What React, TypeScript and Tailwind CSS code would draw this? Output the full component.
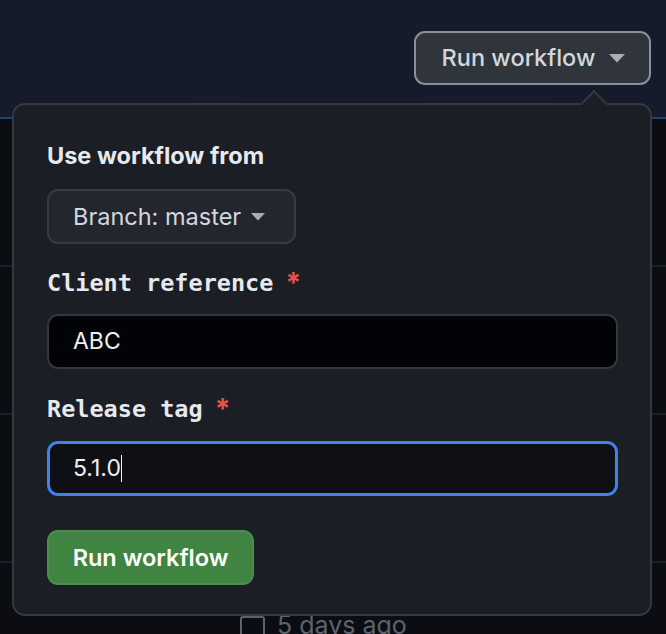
const Caret = ({ className }: { className: string }) => (
  <svg viewBox="0 0 16 9" className={className} fill="currentColor">
    <path d="M0 0h16L8 8.5z" />
  </svg>
);

const ListRow = ({ children }: { children?: React.ReactNode }) => (
  <div className="h-[148px] border-b-2 border-[#1d2128] flex items-end">{children}</div>
);

export default function App() {
  return (
    <div className="w-[666px] h-[634px] relative overflow-hidden bg-[#0b0d12] font-['Inter',sans-serif]">
      <div className="h-[119px] bg-gradient-to-r from-[#151b28] to-[#141c2c] border-b-2 border-[#26426f] flex justify-end items-start pt-[31px] pr-[15px]">
        <button className="w-[237px] h-[54px] rounded-[11px] border-2 border-[#8a9099] bg-[#30343b] flex items-center justify-center gap-[14px] pl-[2px] text-[#d3d7de] text-[23.5px] font-medium">
          <span>Run workflow</span>
          <Caret className="w-[16px] h-[9px] text-[#a9adb5]" />
        </button>
      </div>
      <ListRow />
      <ListRow />
      <ListRow />
      <div className="flex items-start gap-[12px] pl-[240px] pt-[50px] text-[#5c636d] text-[25px] leading-none">
        <span className="w-[25px] h-[25px] border-2 border-[#5c636d] rounded-[3px] mt-[3px] shrink-0" />
        <span className="whitespace-nowrap">5 days ago</span>
      </div>

      <div className="absolute left-[12px] top-[103px] w-[640px] h-[513px] rounded-[13px] border-2 border-[#34383f] bg-[#1b1e25]">
        <div className="absolute left-[570px] top-[-11px] w-[20px] h-[20px] rotate-45 bg-[#1b1e25] border-l-2 border-t-2 border-[#34383f]" />
        <div className="relative flex flex-col items-start px-[33px] pt-[36px]">
          <div className="text-[23.5px] font-bold text-[#e6e9ee] leading-[30px]">Use workflow from</div>
          <button className="mt-[18px] w-[249px] h-[55px] rounded-[11px] border-2 border-[#363a42] bg-[#23262e] flex items-center pl-[24px] gap-[10px] text-[23.5px] text-[#d3d7de]">
            <span>Branch: master</span>
            <Caret className="w-[14px] h-[8px] text-[#a9adb5]" />
          </button>
          <div className="mt-[24px] flex items-center gap-[12px] leading-[30px]">
            <span className="font-['DejaVu_Sans_Mono',monospace] font-bold text-[23.5px] text-[#e6e9ee]">Client reference</span>
            <span className="text-[#e5534b] text-[28px] font-bold">*</span>
          </div>
          <div className="mt-[16px] w-[571px] h-[55px] rounded-[11px] border-2 border-[#33373e] bg-[#020306] flex items-center pl-[24px] text-[23px] text-[#eef0f3]">
            ABC
          </div>
          <div className="mt-[25px] flex items-center gap-[12px] leading-[30px]">
            <span className="font-['DejaVu_Sans_Mono',monospace] font-bold text-[23.5px] text-[#e6e9ee]">Release tag</span>
            <span className="text-[#e5534b] text-[28px] font-bold">*</span>
          </div>
          <div className="mt-[17px] w-[571px] h-[55px] rounded-[11px] border-[3px] border-[#4182e6] bg-[#0e1015] flex items-center pl-[23px] text-[23px] text-[#eef0f3]">
            <span>5.1.0</span>
            <span className="w-[1.5px] h-[27px] bg-[#eef0f3]" />
          </div>
          <button className="mt-[34px] w-[207px] h-[55px] rounded-[11px] border-2 border-[#4a8d4c] bg-[#3f8440] text-white text-[23.5px] font-semibold">
            Run workflow
          </button>
        </div>
      </div>
    </div>
  );
}
